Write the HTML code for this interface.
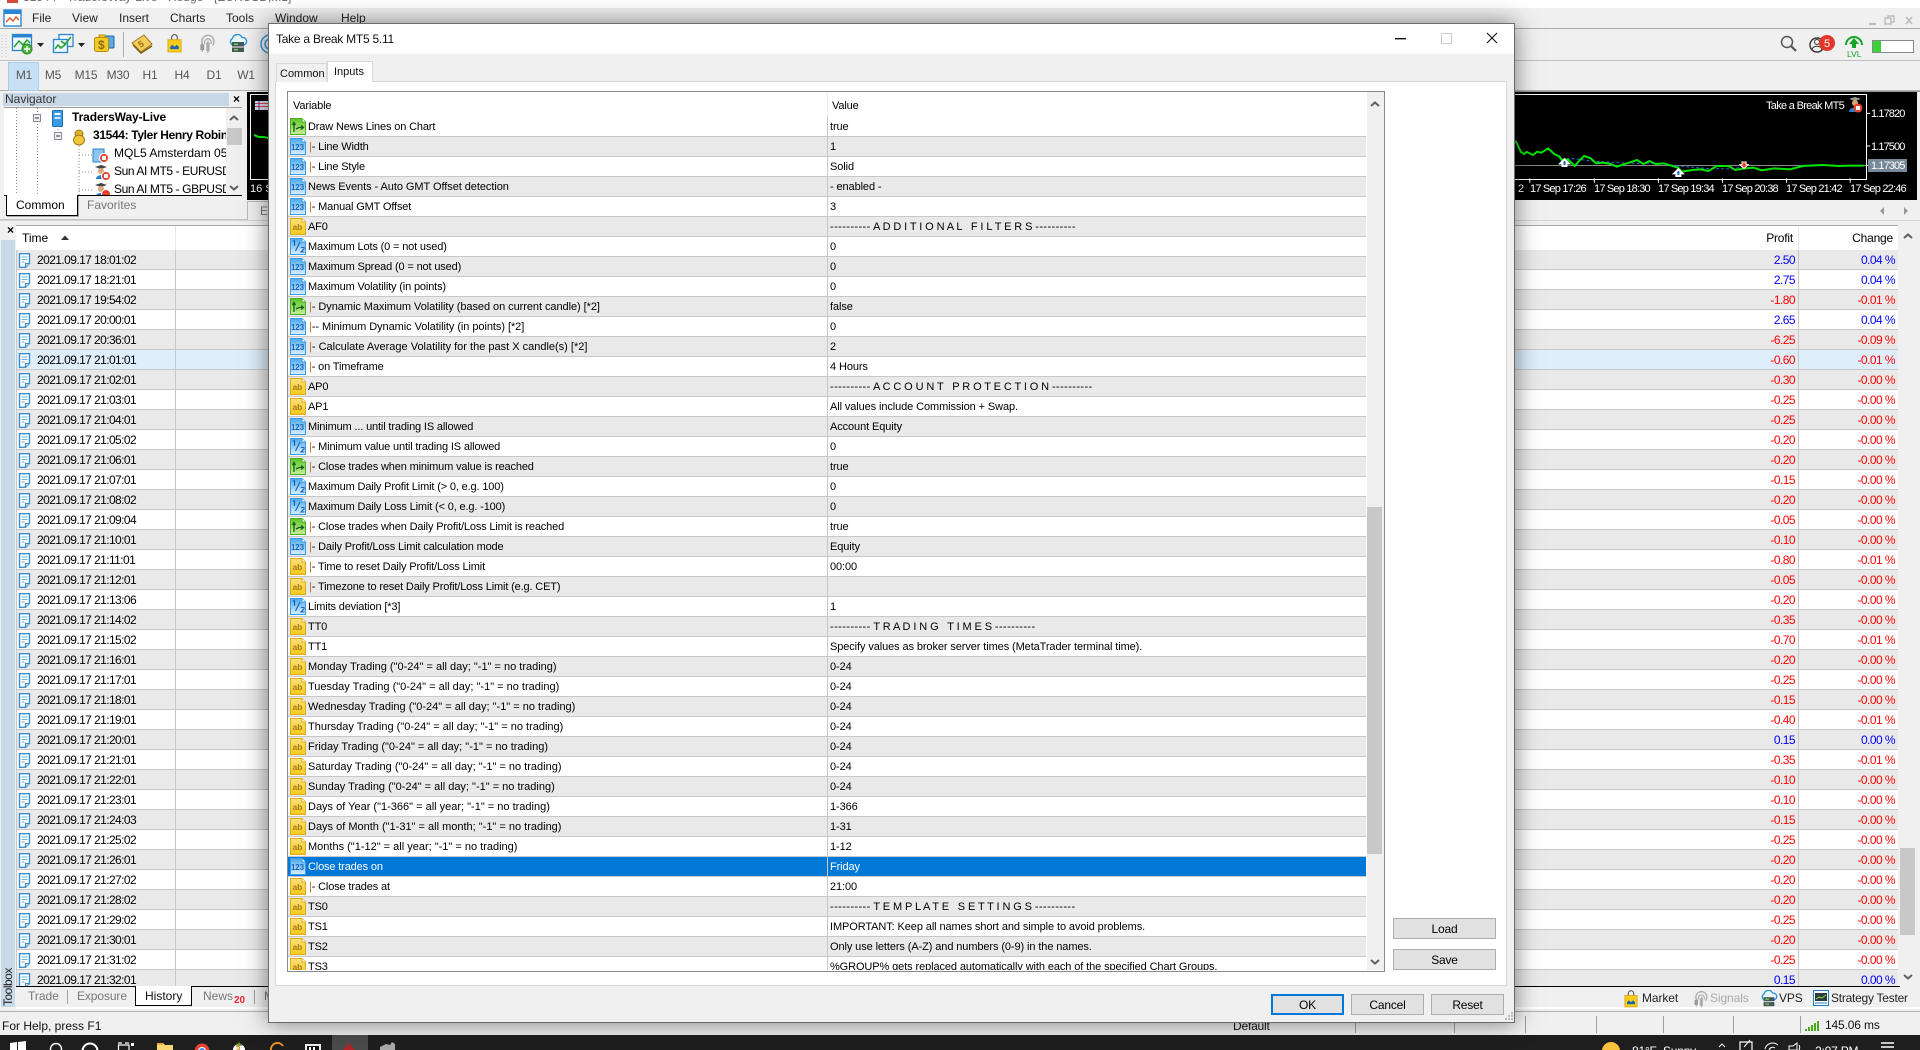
<!DOCTYPE html>
<html><head><meta charset="utf-8"><title>Take a Break MT5</title>
<style>
html,body{margin:0;padding:0;background:#f0f0f0}
body{width:1920px;height:1050px;overflow:hidden;position:relative;font:11px/14px "Liberation Sans",Arial,sans-serif;color:#000}
.a{position:absolute;white-space:pre}
.m{font-size:12px;top:11px;color:#222}
.tf{font-size:12px;top:68px;color:#555;width:30px;text-align:center;letter-spacing:-.2px}
.l{letter-spacing:-.15px}
.ct{color:#fff;letter-spacing:-.8px}
.cp{color:#fff;letter-spacing:-.9px}
#rows{position:absolute;left:288px;top:117px;width:1078px;height:853px;overflow:hidden;letter-spacing:-.15px}
.r{position:relative;height:19px;line-height:19px;border-bottom:1px solid #c8c8c8;background:#fff;white-space:pre}
.r:nth-child(even){background:#e9e9e9}
.r svg{position:absolute;left:2px;top:1px;width:16px;height:17px}
.r span{position:absolute;left:20px;top:1px}
.r span+span{left:542px;letter-spacing:-.1px}
.r .x{left:21px}
.r u{text-decoration:none;color:#b5702c}
.r em{font-style:normal;letter-spacing:.4px}
.r.z{letter-spacing:0}
.r.y{letter-spacing:-.06px}
.r.sel{background:#0078d7;color:#fff}
.r.sel u{color:#fff}
#tb{position:absolute;left:16px;top:250px;width:1882px;height:736px;overflow:hidden;font-size:12px;letter-spacing:-.55px}
.t{position:relative;height:19px;line-height:19px;border-bottom:1px solid #c8c8c8;background:#fff;white-space:pre}
.t:nth-child(odd){background:#e9e9e9}
.t.h{background:#deeefb}
.t svg{position:absolute;left:2px;top:3px;width:13px;height:15px}
.t span{position:absolute;left:21px;top:1px;letter-spacing:-.58px}
.t b,.t i{position:absolute;font-weight:400;font-style:normal;color:#f00;top:1px}
.t b{right:103px}.t i{right:3px}
.t.u b,.t.u i{color:#00f}
.btn{position:absolute;background:#e1e1e1;border:1px solid #adadad;text-align:center;box-sizing:border-box;font-size:12px;line-height:21px;letter-spacing:-.2px}
.tn{position:absolute;font-size:12px;color:#222;white-space:pre}
.gr{color:#777}
.sp{position:absolute;width:1px;background:#a0a0a0}
</style></head><body>
<svg width="0" height="0" style="position:absolute"><defs>
<linearGradient id="gb" x1="0" y1="0" x2="0" y2="1"><stop offset="0" stop-color="#4aa9ef"/><stop offset="1" stop-color="#d9f0fd"/></linearGradient>
<linearGradient id="gg" x1="0" y1="0" x2="0" y2="1"><stop offset="0" stop-color="#5cc42a"/><stop offset="1" stop-color="#c8ef9c"/></linearGradient>
<linearGradient id="gy" x1="0" y1="0" x2="0" y2="1"><stop offset="0" stop-color="#fbe27a"/><stop offset="1" stop-color="#f6c81e"/></linearGradient>
<symbol id="n" viewBox="0 0 16 17"><path d="M.5.5H12L15.5 4V16.5H.5Z" fill="url(#gb)" stroke="#3a9be6"/><path d="M12 .5V4H15.5" fill="#fff" stroke="#3a9be6"/><text x="1" y="12" font-size="8" font-weight="700" fill="#1a62b5" font-family="Liberation Sans">123</text></symbol>
<symbol id="f" viewBox="0 0 16 17"><path d="M.5.5H12L15.5 4V16.5H.5Z" fill="url(#gb)" stroke="#3a9be6"/><path d="M12 .5V4H15.5" fill="#fff" stroke="#3a9be6"/><path d="M3 3.5 4.5 2.5V8M5.5 13 10 4M11 9.5H14V11L11 14H14.5" fill="none" stroke="#1a62b5" stroke-width="1.1"/></symbol>
<symbol id="b" viewBox="0 0 16 17"><path d="M.5.5H12L15.5 4V16.5H.5Z" fill="url(#gg)" stroke="#4dae22"/><path d="M12 .5V4H15.5" fill="#fff" stroke="#4dae22"/><path d="M4 14V5M2.5 7 4 4.5 5.5 7M6 11 9 9.5H13M11 7.5 13.5 9.5 11 11.5" fill="none" stroke="#14601a" stroke-width="1.3"/></symbol>
<symbol id="s" viewBox="0 0 16 17"><path d="M.5.5H12L15.5 4V16.5H.5Z" fill="url(#gy)" stroke="#dcae1a"/><path d="M12 .5V4H15.5" fill="#fff" stroke="#dcae1a"/><text x="2.5" y="12" font-size="8.5" font-weight="700" fill="#a27a12" font-family="Liberation Sans">ab</text></symbol>
<symbol id="doc" viewBox="0 0 13 15"><path d="M1.5.7H11.5V10.5L7.5 14.3H1.5Z" fill="#fff" stroke="#3b8fd0" stroke-width="1.4"/><path d="M7.5 14V10.5H11.5" fill="#bcdcf5" stroke="#3b8fd0"/><path d="M3.5 4H9.5M3.5 6.5H9.5M3.5 9H6.5" stroke="#6fb3e4"/></symbol>
<symbol id="bag" viewBox="0 0 16 20"><path d="M5 7V3.5A3 3 0 0 1 11 3.5V7" fill="none" stroke="#555" stroke-width="1.2"/><rect x="1" y="6" width="14" height="13" fill="#f7cc1c" stroke="#d9a90f"/><path d="M3.5 16V13.5L5.5 11.5 8 13.5 10.5 11.5 12.5 13.5V16Z" fill="#1764b5"/></symbol>
<symbol id="sig" viewBox="0 0 20 20"><g fill="none" stroke="#aaa" stroke-width="1.4"><path d="M6 12A6.5 6.5 0 1 1 16 12"/><path d="M8 10.5A3.5 3.5 0 1 1 14 10.5"/></g><rect x="3" y="11" width="4" height="6" fill="#999"/><rect x="9" y="9" width="4" height="9" fill="#bbb"/><path d="M5 9V19M11 7V20" stroke="#999"/></symbol>
<symbol id="vps" viewBox="0 0 20 20"><path d="M5 11A3.5 3.5 0 0 1 4.5 4.5 5 5 0 0 1 14 3.5 3.7 3.7 0 0 1 15.5 11Z" fill="#e8f5fd" stroke="#2a8fd8" stroke-width="1.4"/><rect x="4" y="8" width="12" height="4.5" fill="#45555a"/><rect x="4" y="13.5" width="12" height="4.5" fill="#45555a"/><rect x="6" y="9.5" width="4" height="1.4" fill="#6de04c"/><rect x="6" y="15" width="4" height="1.4" fill="#6de04c"/></symbol>
<symbol id="chv" viewBox="0 0 10 6"><path d="M1 5 5 1.5 9 5" fill="none" stroke="#606060" stroke-width="2"/></symbol>
<symbol id="chd" viewBox="0 0 10 6"><path d="M1 1 5 4.5 9 1" fill="none" stroke="#606060" stroke-width="2"/></symbol>
</defs></svg>

<!-- title strip -->
<div class="a" style="left:0;top:0;width:1920px;height:8px;background:#fff;overflow:hidden">
<div class="a" style="left:7px;top:0;width:11px;height:3px;background:#d8493c"></div>
<div class="a" style="left:23px;top:-10px;font-size:12px;color:#666">31544 - TradersWay-Live - Hedge - [EURUSD,M1]</div>
</div>
<!-- main window controls -->
<svg class="a" style="left:1860px;top:10px" width="60" height="20"><rect x="9" y="13" width="7" height="2" fill="#bbb"/><rect x="28" y="6" width="6" height="6" fill="none" stroke="#bbb" stroke-width="1.4"/><rect x="25" y="8" width="6" height="6" fill="#f0f0f0" stroke="#bbb" stroke-width="1.4"/><path d="M46 7 52 14M52 7 46 14" stroke="#bbb" stroke-width="1.6"/></svg>
<!-- menu -->
<svg class="a" style="left:3px;top:9px" width="19" height="18"><rect x="1" y="1" width="17" height="16" fill="#fff" stroke="#2a86d0" stroke-width="1.4"/><rect x="1" y="1" width="17" height="4" fill="#2a86d0"/><path d="M3 13 7 9 10 12 13 8 16 11" fill="none" stroke="#e0552a" stroke-width="1.4"/></svg>
<div class="a m" style="left:32px">File</div><div class="a m" style="left:72px">View</div><div class="a m" style="left:119px">Insert</div><div class="a m" style="left:170px">Charts</div><div class="a m" style="left:226px">Tools</div><div class="a m" style="left:275px">Window</div><div class="a m" style="left:341px">Help</div>
<div class="a" style="left:0;top:28px;width:1920px;height:1px;background:#a8a8a8"></div>
<div class="a" style="left:0;top:60px;width:1920px;height:1px;background:#c0c0c0"></div>
<div class="a" style="left:0;top:90px;width:1920px;height:1px;background:#b0b0b0"></div>
<!-- toolbar -->
<svg class="a" style="left:0;top:29px" width="275" height="31">
<path d="M3 6V28M7 6V28" stroke="#c4c4c4" stroke-dasharray="1 2" transform="translate(-1 0)"/>
<rect x="12.5" y="5.5" width="19" height="16" fill="#eef7fd" stroke="#2a86d0" stroke-width="1.3"/><rect x="12.5" y="5.5" width="19" height="3" fill="#2a86d0"/><path d="M14 18 19 12 23 16 27 11 30 14" fill="none" stroke="#27a42c" stroke-width="1.5"/><circle cx="27" cy="20" r="5" fill="#49b93a" stroke="#2c8a2b"/><path d="M27 17V23M24 20H30" stroke="#fff" stroke-width="1.6"/>
<path d="M37 14H44L40.500 18Z" fill="#222"/>
<rect x="59" y="5.500" width="14" height="12" fill="#eef7fd" stroke="#2a86d0" stroke-width="1.3"/><rect x="53.500" y="10.500" width="14" height="13" fill="#eef7fd" stroke="#2a86d0" stroke-width="1.3"/><path d="M61 12 65 15 71 8" fill="none" stroke="#27a42c" stroke-width="1.6"/><path d="M55 20 58 16 61 19 66 15" fill="none" stroke="#27a42c" stroke-width="1.6"/>
<path d="M78 14H85L81.500 18Z" fill="#222"/>
<rect x="103" y="7" width="11" height="12" rx="1" fill="#5ea8e2" stroke="#1c66b0"/><rect x="94.500" y="8.500" width="14" height="14" rx="2" fill="#f6ca26" stroke="#b88c0d"/><text x="98" y="20" font-size="12" font-weight="700" fill="#8b6a08" font-family="Liberation Sans">$</text><path d="M99 8V6H105V8" fill="#f6ca26" stroke="#b88c0d"/>
<rect x="123" y="3" width="1" height="25" fill="#b0b0b0"/>
<path d="M132 14 144 6 152 15 141 23Z" fill="#f4cd5c" stroke="#9c7a20"/><path d="M133 16 141 24 152 17" fill="none" stroke="#7d6018" stroke-width="1.5"/><text x="138" y="18" font-size="9" font-weight="700" fill="#9c6e12" font-family="Liberation Sans" transform="rotate(-30 141 14)">5</text>
<use href="#bag" x="167" y="5" width="15" height="19"/>
<use href="#sig" x="197" y="5" width="20" height="19"/>
<use href="#vps" x="228" y="5" width="20" height="20"/>
<circle cx="270" cy="15" r="9" fill="none" stroke="#3a97da" stroke-width="1.5"/><circle cx="270" cy="15" r="5" fill="none" stroke="#3a97da" stroke-width="1.5"/>
</svg>
<!-- timeframe -->
<div class="a" style="left:8px;top:62px;width:29px;height:27px;background:#c8e0f4;border:1px solid #a8cde9"></div>
<div class="a tf" style="left:9px">M1</div><div class="a tf" style="left:38px">M5</div><div class="a tf" style="left:71px">M15</div><div class="a tf" style="left:103px">M30</div><div class="a tf" style="left:135px">H1</div><div class="a tf" style="left:167px">H4</div><div class="a tf" style="left:199px">D1</div><div class="a tf" style="left:231px">W1</div>
<!-- navigator -->
<div class="a" style="left:3px;top:93px;width:226px;height:13px;background:#c8d7e5"></div>
<div class="a" style="left:5px;top:92px;font-size:12px;color:#333">Navigator</div>
<div class="a" style="left:233px;top:92px;font-size:12px;font-weight:700">×</div>
<div class="a" style="left:4px;top:107px;width:238px;height:88px;background:#fff;border-top:1px solid #a0a0a0;overflow:hidden">
<svg class="a" style="left:0;top:0" width="222" height="88"><path d="M12.500 0V88M33.500 0V5M33.500 16V88M54 18V24M75 35V88M75 47H89M75 64H89M75 82H89" stroke="#888" stroke-dasharray="1 2" fill="none"/>
<rect x="29.500" y="6.500" width="7" height="7" fill="#eee" stroke="#889"/><path d="M31 10H35" stroke="#335"/><rect x="50.500" y="24.500" width="7" height="7" fill="#eee" stroke="#889"/><path d="M52 28H56" stroke="#335"/>
<rect x="48.500" y="2.500" width="10" height="16" rx="1" fill="#3b9de4" stroke="#1a6fb7"/><rect x="50.500" y="5" width="6" height="2" fill="#fff"/><rect x="50.500" y="9" width="6" height="2" fill="#cfe9fb"/>
<circle cx="75" cy="26" r="4" fill="#e0b52a" stroke="#a0790e"/><ellipse cx="75" cy="32" rx="5.500" ry="5" fill="#eec63c" stroke="#a0790e"/>
<rect x="89" y="41" width="11" height="13" fill="#8cc6f0" stroke="#2d84c8"/><circle cx="100" cy="50" r="4.500" fill="#e5412c" stroke="#fff"/><rect x="98" y="48" width="4" height="4" fill="#fff"/>
<path d="M91 59 97 57 103 59 97 61Z" fill="#444"/><circle cx="97" cy="63" r="3" fill="#dfa878"/><path d="M92 71C92 66 102 66 102 71Z" fill="#2c7ccc"/><circle cx="102" cy="68" r="4.500" fill="#e5412c" stroke="#fff"/><rect x="100" y="66" width="4" height="4" fill="#fff"/>
<path d="M91 77 97 75 103 77 97 79Z" fill="#444"/><circle cx="97" cy="81" r="3" fill="#dfa878"/><path d="M92 88C92 84 102 84 102 88Z" fill="#2c7ccc"/><circle cx="102" cy="86" r="4.500" fill="#e5412c" stroke="#fff"/>
</svg>
<div class="a" style="left:68px;top:2px;font-size:12px;font-weight:700;letter-spacing:-.1px">TradersWay-Live</div>
<div class="a" style="left:89px;top:20px;width:133px;overflow:hidden;font-size:12px;font-weight:700;letter-spacing:-.35px">31544: Tyler Henry Robinson</div>
<div class="a" style="left:110px;top:38px;width:112px;overflow:hidden;font-size:12px">MQL5 Amsterdam 05</div>
<div class="a" style="left:110px;top:56px;width:112px;overflow:hidden;font-size:12px;letter-spacing:-.4px">Sun AI MT5 - EURUSD</div>
<div class="a" style="left:110px;top:74px;width:112px;overflow:hidden;font-size:12px;letter-spacing:-.4px">Sun AI MT5 - GBPUSD</div>
<div class="a" style="left:222px;top:0;width:16px;height:88px;background:#f0f0f0"></div>
<div class="a" style="left:223px;top:20px;width:15px;height:17px;background:#c8c8c8"></div>
<svg class="a" style="left:225px;top:7px" width="10" height="6"><use href="#chv"/></svg>
<svg class="a" style="left:225px;top:77px" width="10" height="6"><use href="#chd"/></svg>
</div>
<div class="a" style="left:4px;top:195px;width:238px;height:1px;background:#000"></div>
<div class="a" style="left:6px;top:195px;width:70px;height:20px;background:#fff;border:1px solid #000;border-top:0;box-shadow:1px 1px 0 #aaa"></div>
<div class="a" style="left:16px;top:198px;font-size:12px">Common</div>
<div class="a gr" style="left:87px;top:198px;font-size:12px">Favorites</div>
<div class="a" style="left:0;top:219px;width:247px;height:1px;background:#c4c4c4"></div>
<!-- chart left -->
<div class="a" style="left:247px;top:92px;width:25px;height:108px;background:#000"></div>
<div class="a" style="left:250px;top:94px;width:22px;height:84px;border-left:1px solid #fff;border-top:1px solid #fff;border-bottom:1px solid #fff"></div>
<svg class="a" style="left:254px;top:100px" width="18" height="42"><rect x="1" y="1" width="13" height="9" fill="#dcdcf0"/><path d="M1 3.500H14M1 6.500H14" stroke="#e04040"/><path d="M5 1V10" stroke="#4444c0"/><path d="M0 35 5 37 10 37 18 39" stroke="#0f0" stroke-width="2" fill="none"/></svg>
<div class="a" style="left:250px;top:182px;color:#fff;font-size:11px">16 S</div>
<div class="a" style="left:247px;top:201px;width:25px;height:19px;border:1px solid #bbb;border-bottom:0;box-sizing:border-box"></div>
<div class="a gr" style="left:260px;top:204px;font-size:12px">E</div>
<!-- chart right -->
<div class="a" style="left:1500px;top:92px;width:417px;height:108px;background:#000"></div>
<div class="a" style="left:1500px;top:91px;width:420px;height:1px;background:#999"></div>
<div class="a" style="left:1500px;top:94px;width:366px;height:84px;border-top:1px solid #fff;border-bottom:1px solid #fff;border-right:1px solid #fff"></div>
<div class="a" style="left:1500px;top:165px;width:366px;height:1px;background:#888"></div>
<svg class="a" style="left:1280px;top:0" width="640" height="290" viewBox="0 0 1568 870" preserveAspectRatio="none">
<polyline vector-effect="non-scaling-stroke" fill="none" stroke="#1a6fd0" stroke-width="1" stroke-dasharray="3 2" points="690,478 720,476 770,484 860,490 930,490 975,498 1040,505 1110,507 1140,498"/>
<polyline vector-effect="non-scaling-stroke" fill="none" stroke="#00e600" stroke-width="2" points="577,422 590,455 598,462 605,456 620,465 630,455 640,458 657,445 672,462 685,470 690,480 705,478 722,498 735,480 745,468 760,474 775,490 790,488 810,492 825,500 850,490 875,480 890,492 905,483 920,492 940,490 975,503 985,515 1010,510 1030,508 1050,513 1070,498 1100,498 1115,510 1140,505 1160,503 1180,511 1210,505 1250,508 1280,498 1330,495 1370,498 1400,497 1430,497"/>
<path d="M697 478 707 490H702V498H692V490H687Z" fill="#1b6db5" stroke="#fff" stroke-width="2" vector-effect="non-scaling-stroke"/>
<path d="M976 508 986 520H981V528H971V520H966Z" fill="#1b6db5" stroke="#fff" stroke-width="2" vector-effect="non-scaling-stroke"/>
<path d="M1137 506 1147 494H1142V486H1132V494H1127Z" fill="#e8432c" stroke="#fff" stroke-width="1" vector-effect="non-scaling-stroke"/>
<path d="M612 535V548M770 535V548M927 535V548M1084 535V548M1241 535V548M1397 535V548M1436 340H1446M1436 438H1446M1436 496H1446" stroke="#fff" vector-effect="non-scaling-stroke"/>
</svg>
<div class="a ct" style="left:1518px;top:182px">2</div>
<div class="a ct" style="left:1530px;top:182px">17 Sep 17:26</div>
<div class="a ct" style="left:1594px;top:182px">17 Sep 18:30</div>
<div class="a ct" style="left:1658px;top:182px">17 Sep 19:34</div>
<div class="a ct" style="left:1722px;top:182px">17 Sep 20:38</div>
<div class="a ct" style="left:1786px;top:182px">17 Sep 21:42</div>
<div class="a ct" style="left:1850px;top:182px">17 Sep 22:46</div>
<div class="a" style="left:1766px;top:99px;color:#fff;letter-spacing:-.7px">Take a Break MT5</div>
<svg class="a" style="left:1848px;top:96px" width="15" height="17"><path d="M1 3 7 1 13 3 7 5Z" fill="#999"/><circle cx="7" cy="7" r="3" fill="#d9a56e"/><path d="M1 16C1 10 13 10 13 16Z" fill="#2c7ccc"/><circle cx="10" cy="12" r="4.500" fill="#e5412c"/><rect x="8" y="10" width="4" height="4" fill="#fff"/></svg>
<div class="a cp" style="left:1871px;top:107px">1.17820</div>
<div class="a cp" style="left:1871px;top:140px">1.17500</div>
<div class="a" style="left:1868px;top:159px;width:39px;height:13px;background:#778899"></div>
<div class="a cp" style="left:1871px;top:159px">1.17305</div>
<!-- chart tabs arrows -->
<svg class="a" style="left:1878px;top:205px" width="34" height="12"><path d="M6 2 2 6 6 10Z" fill="#999"/><path d="M26 2 30 6 26 10Z" fill="#999"/></svg>
<div class="a" style="left:0;top:220px;width:1920px;height:1px;background:#d5d5d5"></div>
<!-- right toolbar icons -->
<svg class="a" style="left:1775px;top:32px" width="145" height="28">
<circle cx="12" cy="10" r="5.500" fill="none" stroke="#555" stroke-width="1.5"/><path d="M16 14 21 19" stroke="#555" stroke-width="2.200"/>
<circle cx="42" cy="13" r="7" fill="none" stroke="#333" stroke-width="1.400"/><circle cx="42" cy="10" r="2.500" fill="none" stroke="#333"/><path d="M37 18C37 13 47 13 47 18" fill="none" stroke="#333"/><circle cx="52" cy="11" r="8" fill="#e2382a"/><text x="49" y="15" font-size="11" fill="#fff" font-family="Liberation Sans">5</text>
<path d="M71 13A8 8 0 0 1 87 13" fill="none" stroke="#16a32a" stroke-width="2"/><path d="M79 6 84 12H81V16H77V12H74Z" fill="#16a32a"/><text x="72" y="25" font-size="8.500" fill="#16a32a" font-family="Liberation Sans">LVL</text>
<rect x="97.500" y="8.500" width="41" height="12" fill="#fff" stroke="#888"/><rect x="98" y="9" width="8" height="11" fill="#3bd13b"/>
</svg>
<!-- toolbox -->
<div class="a" style="left:7px;top:223px;font-size:12px;font-weight:700;line-height:14px">×</div>
<div class="a" style="left:1px;top:240px;width:14px;height:767px;background:#c9d9e8"></div>
<div class="a" style="left:1px;top:1006px;transform-origin:0 0;transform:rotate(-90deg);font-size:12px;line-height:14px;color:#222;width:38px;letter-spacing:-.5px">Toolbox</div>
<div class="a" style="left:16px;top:225px;width:1882px;height:25px;background:#fff;border-top:1px solid #a8a8a8;box-sizing:border-box"></div>
<div class="a" style="left:22px;top:231px;font-size:12px">Time</div>
<svg class="a" style="left:61px;top:234px" width="10" height="6"><path d="M0 6 4 1.500 8 6Z" fill="#333"/></svg>
<div class="a" style="left:175px;top:226px;width:1px;height:24px;background:#e8e8e8"></div>
<div class="a" style="left:1798px;top:226px;width:1px;height:24px;background:#e8e8e8"></div>
<div class="a" style="left:1761px;top:231px;font-size:12px;width:32px;text-align:right;letter-spacing:-.2px">Profit</div>
<div class="a" style="left:1848px;top:231px;font-size:12px;width:45px;text-align:right;letter-spacing:-.2px">Change</div>
<div id="tb">
<div class="t u"><svg><use href="#doc"/></svg><span>2021.09.17 18:01:02</span><b>2.50</b><i>0.04 %</i></div>
<div class="t u"><svg><use href="#doc"/></svg><span>2021.09.17 18:21:01</span><b>2.75</b><i>0.04 %</i></div>
<div class="t"><svg><use href="#doc"/></svg><span>2021.09.17 19:54:02</span><b>-1.80</b><i>-0.01 %</i></div>
<div class="t u"><svg><use href="#doc"/></svg><span>2021.09.17 20:00:01</span><b>2.65</b><i>0.04 %</i></div>
<div class="t"><svg><use href="#doc"/></svg><span>2021.09.17 20:36:01</span><b>-6.25</b><i>-0.09 %</i></div>
<div class="t h"><svg><use href="#doc"/></svg><span>2021.09.17 21:01:01</span><b>-0.60</b><i>-0.01 %</i></div>
<div class="t"><svg><use href="#doc"/></svg><span>2021.09.17 21:02:01</span><b>-0.30</b><i>-0.00 %</i></div>
<div class="t"><svg><use href="#doc"/></svg><span>2021.09.17 21:03:01</span><b>-0.25</b><i>-0.00 %</i></div>
<div class="t"><svg><use href="#doc"/></svg><span>2021.09.17 21:04:01</span><b>-0.25</b><i>-0.00 %</i></div>
<div class="t"><svg><use href="#doc"/></svg><span>2021.09.17 21:05:02</span><b>-0.20</b><i>-0.00 %</i></div>
<div class="t"><svg><use href="#doc"/></svg><span>2021.09.17 21:06:01</span><b>-0.20</b><i>-0.00 %</i></div>
<div class="t"><svg><use href="#doc"/></svg><span>2021.09.17 21:07:01</span><b>-0.15</b><i>-0.00 %</i></div>
<div class="t"><svg><use href="#doc"/></svg><span>2021.09.17 21:08:02</span><b>-0.20</b><i>-0.00 %</i></div>
<div class="t"><svg><use href="#doc"/></svg><span>2021.09.17 21:09:04</span><b>-0.05</b><i>-0.00 %</i></div>
<div class="t"><svg><use href="#doc"/></svg><span>2021.09.17 21:10:01</span><b>-0.10</b><i>-0.00 %</i></div>
<div class="t"><svg><use href="#doc"/></svg><span>2021.09.17 21:11:01</span><b>-0.80</b><i>-0.01 %</i></div>
<div class="t"><svg><use href="#doc"/></svg><span>2021.09.17 21:12:01</span><b>-0.05</b><i>-0.00 %</i></div>
<div class="t"><svg><use href="#doc"/></svg><span>2021.09.17 21:13:06</span><b>-0.20</b><i>-0.00 %</i></div>
<div class="t"><svg><use href="#doc"/></svg><span>2021.09.17 21:14:02</span><b>-0.35</b><i>-0.00 %</i></div>
<div class="t"><svg><use href="#doc"/></svg><span>2021.09.17 21:15:02</span><b>-0.70</b><i>-0.01 %</i></div>
<div class="t"><svg><use href="#doc"/></svg><span>2021.09.17 21:16:01</span><b>-0.20</b><i>-0.00 %</i></div>
<div class="t"><svg><use href="#doc"/></svg><span>2021.09.17 21:17:01</span><b>-0.25</b><i>-0.00 %</i></div>
<div class="t"><svg><use href="#doc"/></svg><span>2021.09.17 21:18:01</span><b>-0.15</b><i>-0.00 %</i></div>
<div class="t"><svg><use href="#doc"/></svg><span>2021.09.17 21:19:01</span><b>-0.40</b><i>-0.01 %</i></div>
<div class="t u"><svg><use href="#doc"/></svg><span>2021.09.17 21:20:01</span><b>0.15</b><i>0.00 %</i></div>
<div class="t"><svg><use href="#doc"/></svg><span>2021.09.17 21:21:01</span><b>-0.35</b><i>-0.01 %</i></div>
<div class="t"><svg><use href="#doc"/></svg><span>2021.09.17 21:22:01</span><b>-0.10</b><i>-0.00 %</i></div>
<div class="t"><svg><use href="#doc"/></svg><span>2021.09.17 21:23:01</span><b>-0.10</b><i>-0.00 %</i></div>
<div class="t"><svg><use href="#doc"/></svg><span>2021.09.17 21:24:03</span><b>-0.15</b><i>-0.00 %</i></div>
<div class="t"><svg><use href="#doc"/></svg><span>2021.09.17 21:25:02</span><b>-0.25</b><i>-0.00 %</i></div>
<div class="t"><svg><use href="#doc"/></svg><span>2021.09.17 21:26:01</span><b>-0.20</b><i>-0.00 %</i></div>
<div class="t"><svg><use href="#doc"/></svg><span>2021.09.17 21:27:02</span><b>-0.20</b><i>-0.00 %</i></div>
<div class="t"><svg><use href="#doc"/></svg><span>2021.09.17 21:28:02</span><b>-0.20</b><i>-0.00 %</i></div>
<div class="t"><svg><use href="#doc"/></svg><span>2021.09.17 21:29:02</span><b>-0.25</b><i>-0.00 %</i></div>
<div class="t"><svg><use href="#doc"/></svg><span>2021.09.17 21:30:01</span><b>-0.20</b><i>-0.00 %</i></div>
<div class="t"><svg><use href="#doc"/></svg><span>2021.09.17 21:31:02</span><b>-0.25</b><i>-0.00 %</i></div>
<div class="t u"><svg><use href="#doc"/></svg><span>2021.09.17 21:32:01</span><b>0.15</b><i>0.00 %</i></div>
</div>
<div class="a" style="left:16px;top:250px;width:1px;height:736px;background:#c8c8c8"></div>
<div class="a" style="left:175px;top:250px;width:1px;height:736px;background:#c8c8c8"></div>
<div class="a" style="left:1798px;top:250px;width:1px;height:736px;background:#c8c8c8"></div>
<div class="a" style="left:1900px;top:848px;width:15px;height:87px;background:#c8c8c8"></div>
<svg class="a" style="left:1903px;top:233px" width="10" height="6"><use href="#chv"/></svg>
<svg class="a" style="left:1903px;top:974px" width="10" height="6"><use href="#chd"/></svg>
<!-- bottom tabs -->
<div class="a" style="left:16px;top:986px;width:1884px;height:1px;background:#000"></div>
<div class="a" style="left:16px;top:987px;width:1904px;height:24px;background:#f0f0f0"></div>
<div class="a" style="left:16px;top:1007px;width:1904px;height:2px;background:#fff"></div>
<div class="a" style="left:0;top:1011px;width:1920px;height:1px;background:#b0b0b0"></div>
<div class="tn gr" style="left:28px;top:989px">Trade</div>
<div class="sp" style="left:67px;top:990px;height:14px"></div>
<div class="tn gr" style="left:77px;top:989px;letter-spacing:-.1px">Exposure</div>
<div class="a" style="left:135px;top:986px;width:57px;height:20px;background:#fff;border:1px solid #000;border-top:0;box-sizing:border-box"></div>
<div class="tn" style="left:145px;top:989px;color:#111">History</div>
<div class="tn gr" style="left:203px;top:989px">News</div>
<div class="a" style="left:234px;top:994px;color:#f0282e;font-size:10px;font-weight:700">20</div>
<div class="sp" style="left:254px;top:990px;height:14px"></div>
<div class="tn gr" style="left:264px;top:989px">M</div>
<!-- right bottom items -->
<svg class="a" style="left:1624px;top:990px" width="14" height="18"><use href="#bag" width="14" height="18"/></svg>
<div class="tn" style="left:1642px;top:991px;letter-spacing:-.1px">Market</div>
<svg class="a" style="left:1692px;top:990px" width="17" height="18"><use href="#sig" width="17" height="18"/></svg>
<div class="tn" style="left:1710px;top:991px;color:#aaa;letter-spacing:-.1px">Signals</div>
<svg class="a" style="left:1760px;top:990px" width="18" height="18"><use href="#vps" width="18" height="18"/></svg>
<div class="tn" style="left:1779px;top:991px;letter-spacing:-.1px">VPS</div>
<svg class="a" style="left:1813px;top:990px" width="16" height="16"><rect x=".5" y=".5" width="15" height="15" fill="#fff" stroke="#1f7fce"/><rect x="2" y="3" width="12" height="8" fill="#2c3c3c"/><path d="M3 9 6 7 9 8 13 5" stroke="#8ee04a" fill="none"/><path d="M2 13H14" stroke="#1f7fce"/></svg>
<div class="tn" style="left:1831px;top:991px;letter-spacing:-.25px">Strategy Tester</div>
<!-- status bar -->
<div class="a" style="left:0;top:1012px;width:1920px;height:23px;background:#f0f0f0"></div>
<div class="tn" style="left:2px;top:1019px;color:#111">For Help, press F1</div>
<div class="tn" style="left:1233px;top:1019px;color:#111;letter-spacing:-.2px">Default</div>
<div class="sp" style="left:1355px;top:1016px;height:17px"></div><div class="sp" style="left:1454px;top:1016px;height:17px"></div><div class="sp" style="left:1525px;top:1016px;height:17px"></div><div class="sp" style="left:1596px;top:1016px;height:17px"></div><div class="sp" style="left:1663px;top:1016px;height:17px"></div><div class="sp" style="left:1733px;top:1016px;height:17px"></div><div class="sp" style="left:1800px;top:1016px;height:17px"></div>
<svg class="a" style="left:1805px;top:1020px" width="15" height="11"><path d="M1 11V9M4 11V7M7 11V5M10 11V3M13 11V1" stroke="#4aaa1a" stroke-width="2"/></svg>
<div class="tn" style="left:1825px;top:1018px;letter-spacing:-.15px;color:#111">145.06 ms</div>
<!-- taskbar -->
<div class="a" style="left:0;top:1035px;width:1920px;height:15px;background:#1e1e1e;overflow:hidden">
<svg class="a" style="left:0;top:0" width="1920" height="15">
<path d="M10 8 17 7V15H10ZM18 7 26 6V15H18Z" fill="#fff"/>
<circle cx="56" cy="14" r="5.500" fill="none" stroke="#fff" stroke-width="1.400"/>
<circle cx="90" cy="16" r="7.500" fill="none" stroke="#fff" stroke-width="2"/>
<path d="M118.500 15V10H129V15M118 8H122M125 8H129" fill="none" stroke="#fff" stroke-width="1.200"/><rect x="131" y="8" width="3" height="3" fill="#fff"/>
<path d="M157 15V8H163L165 10H173V15Z" fill="#f8d775"/><rect x="157" y="8" width="6" height="2" fill="#e8b33a"/>
<circle cx="202" cy="16" r="7.500" fill="#e94235"/><path d="M194.500 15H202V24H194.500Z" fill="#34a853"/><circle cx="202" cy="16" r="3.500" fill="#4285f4" stroke="#fff"/>
<path d="M233 15A6 6 0 0 1 245 15Z" fill="#fff"/><path d="M236 11 239 7 242 11Z" fill="#4aa83a"/><text x="236" y="15" font-size="8" font-weight="700" fill="#c88a1a" font-family="Liberation Sans">5</text>
<path d="M271 15A6.500 6.500 0 0 1 283 11" fill="none" stroke="#f59a23" stroke-width="1.800"/>
<rect x="305" y="9" width="16" height="6" fill="#eee"/><rect x="307" y="11" width="12" height="4" fill="#111"/><rect x="309" y="12" width="2" height="3" fill="#fff"/><rect x="313" y="12" width="2" height="3" fill="#fff"/>
<rect x="332" y="0" width="36" height="15" fill="#4b4b4b"/><path d="M349 8 343 15H355Z" fill="#b0232a"/>
<path d="M380 15V12L386 9 390 10 392 7 395 9V15Z" fill="#a8a8a8"/>
<circle cx="1611" cy="16" r="9" fill="#f8c23a"/>
<path d="M1719 12 1722 9 1725 12" fill="none" stroke="#fff"/>
<path d="M1740 15V7H1752V15" fill="none" stroke="#fff" stroke-width="1.200"/><path d="M1744 12 1750 5" stroke="#fff"/>
<path d="M1765 14A8 8 0 0 1 1778 10M1769 15A4 4 0 0 1 1775 13" fill="none" stroke="#fff"/>
<path d="M1789 11H1793L1797 8V15H1789ZM1799 10A5 5 0 0 1 1799 15" fill="none" stroke="#fff"/>
<path d="M1881 8H1894M1881 12H1894" stroke="#fff" stroke-width="1.400"/>
</svg>
<div class="a" style="left:1632px;top:9px;color:#fff;font-size:12px;letter-spacing:-.2px">81°F  Sunny</div>
<div class="a" style="left:1815px;top:9px;color:#fff;font-size:12px;letter-spacing:-.2px">2:07 PM</div>
</div>

<!-- DIALOG -->
<div class="a" style="left:268px;top:23px;width:1247px;height:1000px;background:#f0f0f0;border:1px solid #6b6b6b;box-sizing:border-box;box-shadow:0 0 22px rgba(0,0,0,.5)"></div>
<div class="a" style="left:269px;top:24px;width:1245px;height:30px;background:#fff"></div>
<div class="a" style="left:276px;top:32px;font-size:12px;letter-spacing:-.25px;color:#111">Take a Break MT5 5.11</div>
<svg class="a" style="left:1390px;top:28px" width="112" height="20"><rect x="5" y="10" width="11" height="1.400" fill="#111"/><rect x="51.500" y="5.500" width="10" height="10" fill="none" stroke="#ccc"/><path d="M97 5 107 15M107 5 97 15" stroke="#111" stroke-width="1.100"/></svg>
<div class="a" style="left:275px;top:81px;width:1232px;height:905px;background:#fff;border:1px solid #d9d9d9;box-sizing:border-box"></div>
<div class="a" style="left:276px;top:63px;width:51px;height:19px;background:#f0f0f0;border:1px solid #d9d9d9;border-bottom:0;box-sizing:border-box"></div>
<div class="a" style="left:280px;top:67px;color:#111">Common</div>
<div class="a" style="left:327px;top:61px;width:46px;height:21px;background:#fff;border:1px solid #d9d9d9;border-bottom:0;box-sizing:border-box"></div>
<div class="a" style="left:334px;top:65px;color:#111">Inputs</div>
<div class="a" style="left:287px;top:91px;width:1098px;height:881px;background:#fff;border:1px solid #858a90;box-sizing:border-box"></div>
<div class="a l" style="left:293px;top:99px">Variable</div>
<div class="a l" style="left:832px;top:99px">Value</div>
<div class="a" style="left:827px;top:92px;width:1px;height:25px;background:#ececec"></div>
<div id="rows">
<div class="r"><svg><use href="#b"/></svg><span>Draw News Lines on Chart</span><span>true</span></div>
<div class="r"><svg><use href="#n"/></svg><span class="x"><u>|</u>- Line Width</span><span>1</span></div>
<div class="r"><svg><use href="#n"/></svg><span class="x"><u>|</u>- Line Style</span><span>Solid</span></div>
<div class="r y"><svg><use href="#n"/></svg><span>News Events - Auto GMT Offset detection</span><span>- enabled -</span></div>
<div class="r"><svg><use href="#n"/></svg><span class="x"><u>|</u>- Manual GMT Offset</span><span>3</span></div>
<div class="r"><svg><use href="#s"/></svg><span>AF0</span><span><em>----------</em> A D D I T I O N A L   F I L T E R S <em>----------</em></span></div>
<div class="r"><svg><use href="#f"/></svg><span>Maximum Lots (0 = not used)</span><span>0</span></div>
<div class="r"><svg><use href="#n"/></svg><span>Maximum Spread (0 = not used)</span><span>0</span></div>
<div class="r"><svg><use href="#n"/></svg><span>Maximum Volatility (in points)</span><span>0</span></div>
<div class="r y"><svg><use href="#b"/></svg><span class="x"><u>|</u>- Dynamic Maximum Volatility (based on current candle) [*2]</span><span>false</span></div>
<div class="r y"><svg><use href="#n"/></svg><span class="x"><u>|</u>-- Minimum Dynamic Volatility (in points) [*2]</span><span>0</span></div>
<div class="r z"><svg><use href="#n"/></svg><span class="x"><u>|</u>- Calculate Average Volatility for the past X candle(s) [*2]</span><span>2</span></div>
<div class="r"><svg><use href="#n"/></svg><span class="x"><u>|</u>- on Timeframe</span><span>4 Hours</span></div>
<div class="r"><svg><use href="#s"/></svg><span>AP0</span><span><em>----------</em> A C C O U N T   P R O T E C T I O N <em>----------</em></span></div>
<div class="r"><svg><use href="#s"/></svg><span>AP1</span><span>All values include Commission + Swap.</span></div>
<div class="r"><svg><use href="#n"/></svg><span>Minimum ... until trading IS allowed</span><span>Account Equity</span></div>
<div class="r"><svg><use href="#f"/></svg><span class="x"><u>|</u>- Minimum value until trading IS allowed</span><span>0</span></div>
<div class="r"><svg><use href="#b"/></svg><span class="x"><u>|</u>- Close trades when minimum value is reached</span><span>true</span></div>
<div class="r"><svg><use href="#f"/></svg><span>Maximum Daily Profit Limit (&gt; 0, e.g. 100)</span><span>0</span></div>
<div class="r"><svg><use href="#f"/></svg><span>Maximum Daily Loss Limit (&lt; 0, e.g. -100)</span><span>0</span></div>
<div class="r"><svg><use href="#b"/></svg><span class="x"><u>|</u>- Close trades when Daily Profit/Loss Limit is reached</span><span>true</span></div>
<div class="r"><svg><use href="#n"/></svg><span class="x"><u>|</u>- Daily Profit/Loss Limit calculation mode</span><span>Equity</span></div>
<div class="r"><svg><use href="#s"/></svg><span class="x"><u>|</u>- Time to reset Daily Profit/Loss Limit</span><span>00:00</span></div>
<div class="r"><svg><use href="#s"/></svg><span class="x"><u>|</u>- Timezone to reset Daily Profit/Loss Limit (e.g. CET)</span><span></span></div>
<div class="r"><svg><use href="#f"/></svg><span>Limits deviation [*3]</span><span>1</span></div>
<div class="r"><svg><use href="#s"/></svg><span>TT0</span><span><em>----------</em> T R A D I N G   T I M E S <em>----------</em></span></div>
<div class="r"><svg><use href="#s"/></svg><span>TT1</span><span>Specify values as broker server times (MetaTrader terminal time).</span></div>
<div class="r z"><svg><use href="#s"/></svg><span>Monday Trading ("0-24" = all day; "-1" = no trading)</span><span>0-24</span></div>
<div class="r z"><svg><use href="#s"/></svg><span>Tuesday Trading ("0-24" = all day; "-1" = no trading)</span><span>0-24</span></div>
<div class="r z"><svg><use href="#s"/></svg><span>Wednesday Trading ("0-24" = all day; "-1" = no trading)</span><span>0-24</span></div>
<div class="r z"><svg><use href="#s"/></svg><span>Thursday Trading ("0-24" = all day; "-1" = no trading)</span><span>0-24</span></div>
<div class="r z"><svg><use href="#s"/></svg><span>Friday Trading ("0-24" = all day; "-1" = no trading)</span><span>0-24</span></div>
<div class="r z"><svg><use href="#s"/></svg><span>Saturday Trading ("0-24" = all day; "-1" = no trading)</span><span>0-24</span></div>
<div class="r z"><svg><use href="#s"/></svg><span>Sunday Trading ("0-24" = all day; "-1" = no trading)</span><span>0-24</span></div>
<div class="r z"><svg><use href="#s"/></svg><span>Days of Year ("1-366" = all year; "-1" = no trading)</span><span>1-366</span></div>
<div class="r z"><svg><use href="#s"/></svg><span>Days of Month ("1-31" = all month; "-1" = no trading)</span><span>1-31</span></div>
<div class="r z"><svg><use href="#s"/></svg><span>Months ("1-12" = all year; "-1" = no trading)</span><span>1-12</span></div>
<div class="r sel"><svg><use href="#n"/></svg><span>Close trades on</span><span>Friday</span></div>
<div class="r"><svg><use href="#s"/></svg><span class="x"><u>|</u>- Close trades at</span><span>21:00</span></div>
<div class="r"><svg><use href="#s"/></svg><span>TS0</span><span><em>----------</em> T E M P L A T E   S E T T I N G S <em>----------</em></span></div>
<div class="r"><svg><use href="#s"/></svg><span>TS1</span><span>IMPORTANT: Keep all names short and simple to avoid problems.</span></div>
<div class="r"><svg><use href="#s"/></svg><span>TS2</span><span>Only use letters (A-Z) and numbers (0-9) in the names.</span></div>
<div class="r"><svg><use href="#s"/></svg><span>TS3</span><span>%GROUP% gets replaced automatically with each of the specified Chart Groups.</span></div>
</div>
<div class="a" style="left:827px;top:117px;width:1px;height:853px;background:#c8c8c8"></div>
<div class="a" style="left:1367px;top:92px;width:17px;height:878px;background:#f0f0f0"></div>
<div class="a" style="left:1367px;top:507px;width:15px;height:347px;background:#c8c8c8"></div>
<svg class="a" style="left:1370px;top:101px" width="10" height="6"><use href="#chv"/></svg>
<svg class="a" style="left:1370px;top:959px" width="10" height="6"><use href="#chd"/></svg>
<div class="btn" style="left:1393px;top:918px;width:103px;height:21px">Load</div>
<div class="btn" style="left:1393px;top:949px;width:103px;height:21px">Save</div>
<div class="btn" style="left:1271px;top:994px;width:73px;height:21px;border:2px solid #0078d7;line-height:19px">OK</div>
<div class="btn" style="left:1351px;top:994px;width:73px;height:21px">Cancel</div>
<div class="btn" style="left:1431px;top:994px;width:73px;height:21px">Reset</div>
<svg class="a" style="left:1504px;top:1011px" width="10" height="10"><path d="M7 1h2v2h-2zM4 4h2v2h-2zM7 4h2v2h-2zM1 7h2v2h-2zM4 7h2v2h-2zM7 7h2v2h-2z" fill="#bbb"/></svg>
</body></html>
